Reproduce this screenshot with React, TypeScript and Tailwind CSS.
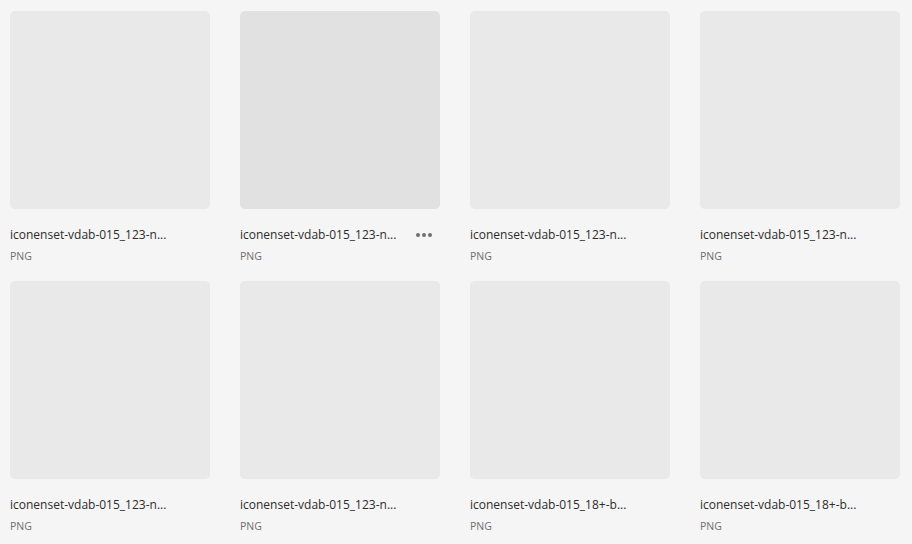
import React from 'react';

interface Asset {
  name: string;
  type: string;
  active?: boolean;
}

const assets: Asset[] = [
  { name: 'iconenset-vdab-015_123-n...', type: 'PNG' },
  { name: 'iconenset-vdab-015_123-n...', type: 'PNG', active: true },
  { name: 'iconenset-vdab-015_123-n...', type: 'PNG' },
  { name: 'iconenset-vdab-015_123-n...', type: 'PNG' },
  { name: 'iconenset-vdab-015_123-n...', type: 'PNG' },
  { name: 'iconenset-vdab-015_123-n...', type: 'PNG' },
  { name: 'iconenset-vdab-015_18+-b...', type: 'PNG' },
  { name: 'iconenset-vdab-015_18+-b...', type: 'PNG' },
];

const AssetCard: React.FC<Asset> = ({ name, type, active }) => (
  <div className="w-[200px]">
    <div className={`h-[198px] rounded-[5px] ${active ? 'bg-[#e1e1e1]' : 'bg-[#e9e9e9]'}`} />
    <div className="mt-[18px] flex items-center justify-between h-4">
      <span className="text-[12px] leading-4 text-[#2c2c2c]">{name}</span>
      {active && (
        <span className="flex items-center gap-[2px] mr-[8px]">
          <span className="w-[4px] h-[4px] rounded-full bg-[#6e6e6e]" />
          <span className="w-[4px] h-[4px] rounded-full bg-[#6e6e6e]" />
          <span className="w-[4px] h-[4px] rounded-full bg-[#6e6e6e]" />
        </span>
      )}
    </div>
    <div className="mt-[6px] text-[10.5px] leading-[14px] text-[#6e6e6e]">{type}</div>
  </div>
);

export default function App() {
  return (
    <div
      className="w-[912px] h-[544px] overflow-hidden bg-[#f5f5f5] pl-[10px] pt-[11px]"
      style={{ fontFamily: '"Open Sans", "Noto Sans", sans-serif' }}
    >
      <div className="grid grid-cols-[200px_200px_200px_200px] gap-x-[30px] gap-y-[18px]">
        {assets.map((a, i) => (
          <AssetCard key={i} {...a} />
        ))}
      </div>
    </div>
  );
}
